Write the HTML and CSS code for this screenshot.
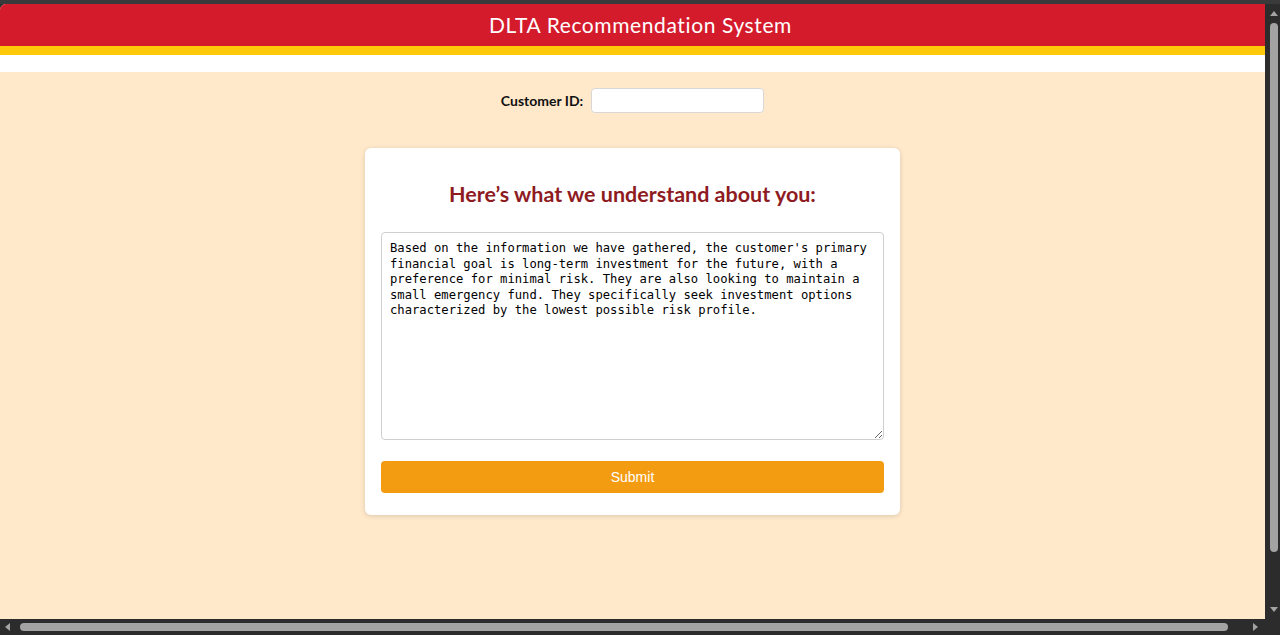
FILE: index.html
```html
<!DOCTYPE html>
<html lang="en">
<head>
<meta charset="utf-8">
<title>DLTA Recommendation System</title>
<link rel="stylesheet" href="styles.css">
</head>
<body>
<div class="window">
  <div class="topstrip"></div>
  <div class="viewport">
    <header class="header">
      <h1 class="title">DLTA Recommendation System</h1>
    </header>
    <div class="whitebar"></div>
    <main class="main">
      <div class="id-row">
        <label class="id-label" for="cid">Customer ID:</label>
        <input class="id-input" id="cid" type="text">
      </div>
      <section class="card">
        <h2 class="card-title">Here’s what we understand about you:</h2>
        <textarea class="summary">Based on the information we have gathered, the customer's primary financial goal is long-term investment for the future, with a preference for minimal risk. They are also looking to maintain a small emergency fund. They specifically seek investment options characterized by the lowest possible risk profile.</textarea>
        <button class="submit" type="button">Submit</button>
      </section>
    </main>
  </div>
  <div class="vscroll">
    <span class="arrow arrow-up"></span>
    <span class="vthumb"></span>
    <span class="vspace"></span>
    <span class="arrow arrow-down"></span>
  </div>
  <div class="hscroll">
    <span class="arrow arrow-left"></span>
    <span class="hthumb"></span>
    <span class="arrow arrow-right"></span>
  </div>
  <div class="corner"></div>
</div>
</body>
</html>
```

FILE: styles.css
```css
* { box-sizing: border-box; }
html, body { margin: 0; padding: 0; }
body {
  background: #2c2c2c;
  font-family: "Lato", "Open Sans", sans-serif;
}
.window {
  width: 1280px;
  height: 635px;
  display: grid;
  grid-template-columns: 1265px 15px;
  grid-template-rows: 4px 615px 16px;
  background: #2c2c2c;
}
.topstrip {
  grid-column: 1 / 3;
  background: #3a3a3a;
}
.viewport {
  overflow: hidden;
  background: #ffe9ca;
  border-top-left-radius: 6px;
  display: flex;
  flex-direction: column;
}
.header {
  background: #d41b2c;
  height: 51px;
  border-bottom: 9px solid #ffc809;
  display: flex;
  align-items: center;
  justify-content: center;
  padding-left: 16px;
}
.title {
  margin: 0;
  color: #fff;
  font-size: 21px;
  font-weight: 400;
  line-height: 24px;
  letter-spacing: 0.6px;
}
.whitebar {
  height: 17px;
  background: #fff;
}
.main {
  display: flex;
  flex-direction: column;
  align-items: center;
}
.id-row {
  margin-top: 16px;
  display: flex;
  align-items: center;
  gap: 8px;
}
.id-label {
  font-size: 14px;
  font-weight: 700;
  color: #111;
}
.id-input {
  width: 173px;
  height: 25px;
  border: 1px solid #d8d8d8;
  border-radius: 4px;
  background: #fff;
  margin: 0;
}
.card {
  margin-top: 35px;
  width: 535px;
  background: #fff;
  border-radius: 6px;
  box-shadow: 0 1px 5px rgba(0, 0, 0, 0.15);
  padding: 20px 16px 22px;
  display: flex;
  flex-direction: column;
}
.card-title {
  margin: 13px 0 25px;
  text-align: center;
  color: #8e1b1f;
  font-size: 21.5px;
  font-weight: 700;
  line-height: 26px;
}
.summary {
  width: 100%;
  height: 208px;
  border: 1px solid #cfcfcf;
  border-radius: 4px;
  padding: 8px 4px 8px 8px;
  font-family: "DejaVu Sans Mono", "Liberation Mono", monospace;
  font-size: 12.2px;
  line-height: 15.5px;
  color: #000;
  margin: 0;
  resize: both;
}
.submit {
  margin-top: 21px;
  height: 32px;
  border: none;
  border-radius: 4px;
  background: #f39c12;
  color: #fff;
  font-family: "Liberation Sans", Arial, sans-serif;
  font-size: 14px;
}
.vscroll {
  background: #2c2c2c;
  display: flex;
  flex-direction: column;
  align-items: center;
  padding: 7px 0 7px 2px;
}
.arrow { width: 0; height: 0; display: block; }
.arrow-up {
  border-left: 4px solid transparent;
  border-right: 4px solid transparent;
  border-bottom: 5px solid #a3a3a3;
}
.arrow-down {
  border-left: 4px solid transparent;
  border-right: 4px solid transparent;
  border-top: 5px solid #a3a3a3;
}
.vthumb {
  margin-top: 7px;
  width: 8px;
  height: 529px;
  border-radius: 4px;
  background: #a3a3a3;
}
.vspace { flex: 1; }
.hscroll {
  background: #2c2c2c;
  display: flex;
  align-items: center;
  padding: 0 7px 0 5px;
}
.arrow-left {
  border-top: 4px solid transparent;
  border-bottom: 4px solid transparent;
  border-right: 5px solid #a3a3a3;
}
.arrow-right {
  margin-left: auto;
  border-top: 4px solid transparent;
  border-bottom: 4px solid transparent;
  border-left: 5px solid #a3a3a3;
}
.hthumb {
  margin-left: 10px;
  width: 1208px;
  height: 8px;
  border-radius: 4px;
  background: #a3a3a3;
}
.corner {
  background: #2c2c2c;
  border-bottom-right-radius: 4px;
}
```
